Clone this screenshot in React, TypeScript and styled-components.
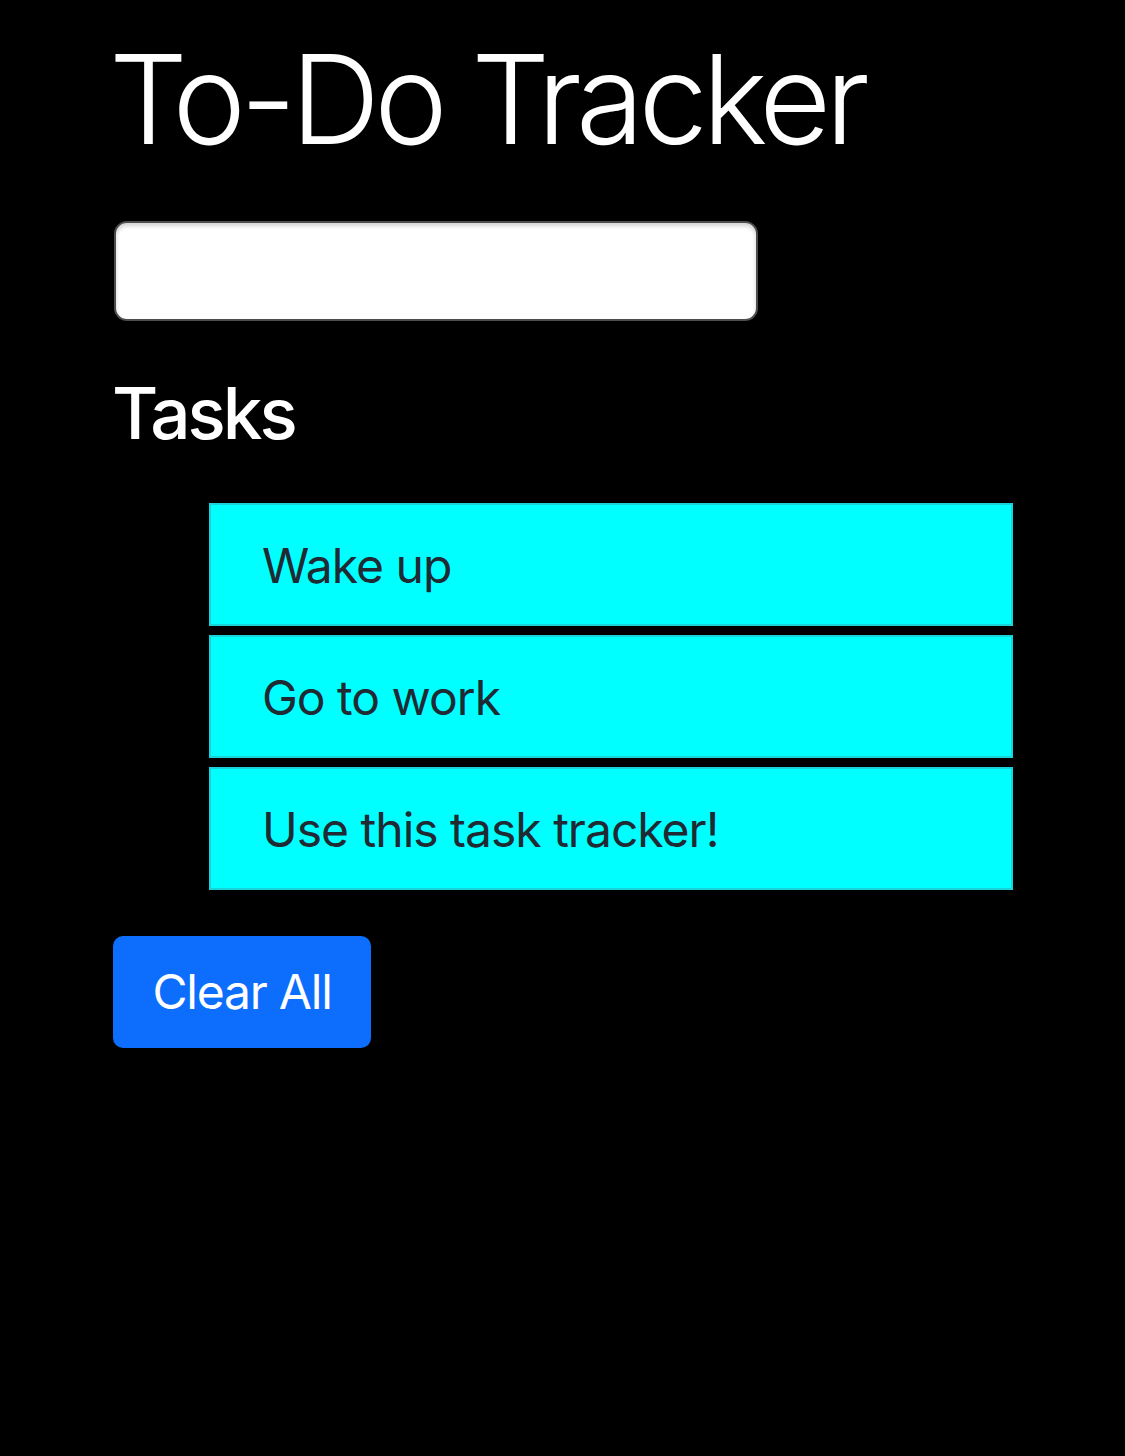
import React from "react";
import styled, { createGlobalStyle } from "styled-components";

const Global = createGlobalStyle`
  html, body {
    margin: 0;
    padding: 0;
    background: #000;
  }
  body {
    font-family: Inter, "Noto Sans", "Liberation Sans", sans-serif;
    color: #fff;
  }
`;

const Page = styled.main`
  padding: 25px 0 0 114px;
  min-height: 1456px;
  box-sizing: border-box;
  background: #000;
`;

const Title = styled.h1`
  margin: 0 0 0 -5px;
  font-size: 124px;
  font-weight: 300;
  line-height: 1.2;
  letter-spacing: -5.7px;
  color: #fff;
`;

const TaskInput = styled.input`
  display: block;
  margin-top: 47px;
  width: 644px;
  height: 100px;
  box-sizing: border-box;
  border: 2px solid #4d4d4d;
  border-radius: 13px;
  background: #fff;
  box-shadow: inset 0 3px 4px rgba(0, 0, 0, 0.18);
  font: inherit;
  font-size: 40px;
  padding: 0 20px;
  outline: none;
`;

const SectionTitle = styled.h2`
  margin: 50px 0 0 -2px;
  font-size: 71px;
  font-weight: 500;
  line-height: 1.2;
  letter-spacing: -3px;
  color: #fff;
`;

const TaskList = styled.ul`
  list-style: none;
  margin: 47px 0 0;
  padding: 0 0 0 95px;
  width: 804px;
  display: flex;
  flex-direction: column;
  gap: 9px;
`;

const TaskItem = styled.li`
  background: #00ffff;
  border: 2px solid #19d3d8;
  padding: 24px 51px 22px;
  font-size: 48px;
  line-height: 73px;
  letter-spacing: -1px;
  color: #1f2a33;
`;

const ClearButton = styled.button`
  margin-top: 46px;
  display: block;
  margin-left: -1px;
  width: 258px;
  height: 112px;
  border: none;
  border-radius: 10px;
  background: #0d6efd;
  color: #fff;
  font-family: inherit;
  font-size: 48px;
  font-weight: 400;
  letter-spacing: -1.2px;
  line-height: 1.5;
  padding: 0;
  cursor: pointer;
`;

const tasks = ["Wake up", "Go to work", "Use this task tracker!"];

export default function App() {
  return (
    <>
      <Global />
      <Page>
        <Title>To-Do Tracker</Title>
        <TaskInput type="text" aria-label="New task" />
        <SectionTitle>Tasks</SectionTitle>
        <TaskList>
          {tasks.map((t) => (
            <TaskItem key={t}>{t}</TaskItem>
          ))}
        </TaskList>
        <ClearButton>Clear All</ClearButton>
      </Page>
    </>
  );
}
